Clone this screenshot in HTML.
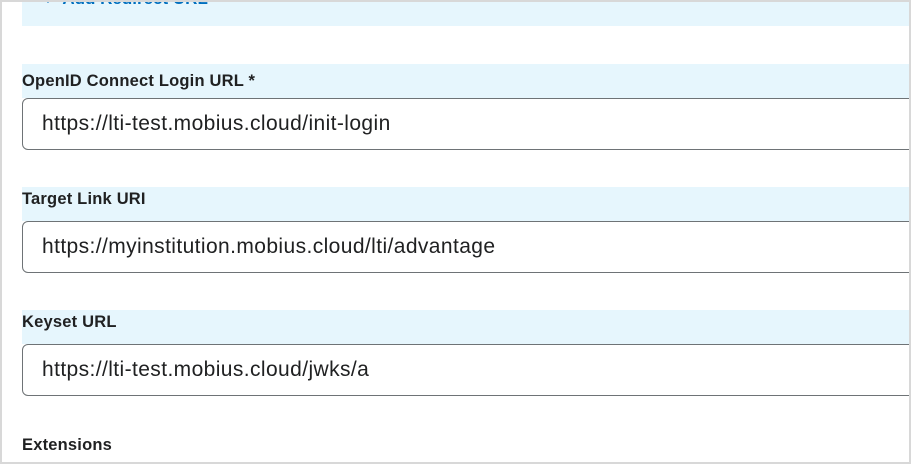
<!DOCTYPE html>
<html><head><style>
html,body{margin:0;padding:0;}
body{width:911px;height:464px;position:relative;overflow:hidden;background:#fff;font-family:"Liberation Sans",sans-serif;color:#202122;}
.frame{position:absolute;left:0;top:0;width:907px;height:460px;border:2px solid #d8d8d8;}
.band{position:absolute;left:22px;right:2px;background:#e6f6fd;}
.lbl{position:absolute;left:22px;font-size:16.5px;font-weight:bold;color:#202122;letter-spacing:0.2px;}
.inp{position:absolute;left:22px;width:900px;height:52px;border:1px solid #6e7376;border-radius:6px;box-sizing:border-box;font-size:21px;line-height:50px;padding-left:19px;color:#202122;background:#fff;letter-spacing:0.4px;}
.add{position:absolute;left:43px;top:-11px;font-size:17px;font-weight:bold;color:#006fbf;}
</style></head><body>
<div class="band" style="top:0;height:26px;"></div>
<div class="add">+&nbsp;&nbsp;Add Redirect URL</div>
<div class="band" style="top:64px;height:34px;"></div>
<div class="lbl" style="top:72px;">OpenID Connect Login URL *</div>
<div class="inp" style="top:98px;">https://lti-test.mobius.cloud/init-login</div>
<div class="band" style="top:187px;height:34px;"></div>
<div class="lbl" style="top:190px;">Target Link URI</div>
<div class="inp" style="top:221px;">https://myinstitution.mobius.cloud/lti/advantage</div>
<div class="band" style="top:310px;height:34px;"></div>
<div class="lbl" style="top:313px;">Keyset URL</div>
<div class="inp" style="top:344px;">https://lti-test.mobius.cloud/jwks/a</div>
<div class="lbl" style="top:436px;">Extensions</div>
<div class="frame"></div>
</body></html>
